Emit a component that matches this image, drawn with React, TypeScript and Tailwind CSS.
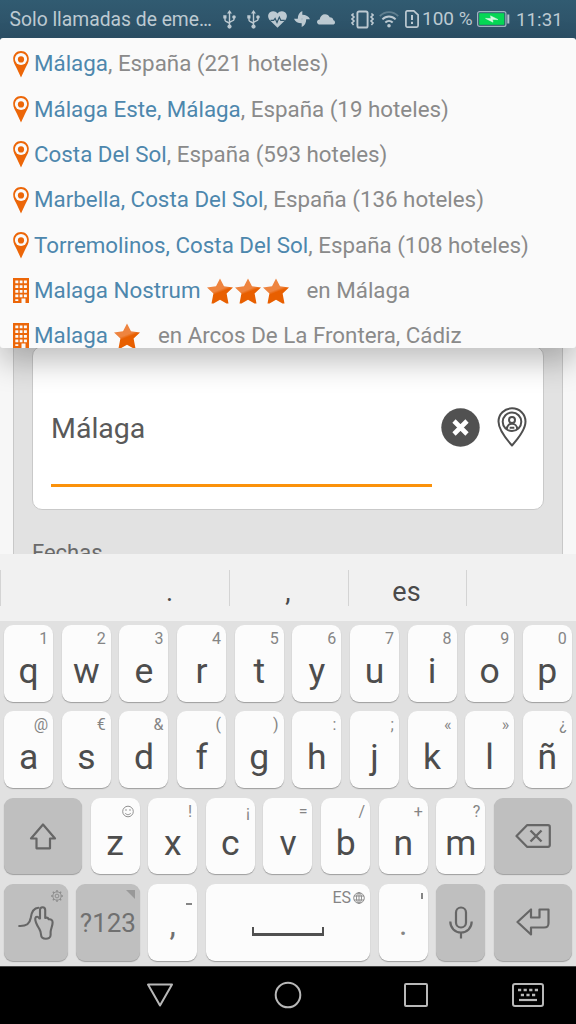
import type { ReactNode } from "react";
import clsx from "clsx";

interface Suggestion {
  kind: "place" | "hotel";
  name: string;
  detail: string;
  stars?: number;
}

interface LetterKey {
  label: string;
  hint: ReactNode;
}

const suggestions: Suggestion[] = [
  { kind: "place", name: "Málaga", detail: ", España (221 hoteles)" },
  { kind: "place", name: "Málaga Este, Málaga", detail: ", España (19 hoteles)" },
  { kind: "place", name: "Costa Del Sol", detail: ", España (593 hoteles)" },
  { kind: "place", name: "Marbella, Costa Del Sol", detail: ", España (136 hoteles)" },
  { kind: "place", name: "Torremolinos, Costa Del Sol", detail: ", España (108 hoteles)" },
  { kind: "hotel", name: "Malaga Nostrum", detail: "en Málaga", stars: 3 },
  { kind: "hotel", name: "Malaga", detail: "en Arcos De La Frontera, Cádiz", stars: 1 },
];

const topRow: LetterKey[] = [
  { label: "q", hint: "1" },
  { label: "w", hint: "2" },
  { label: "e", hint: "3" },
  { label: "r", hint: "4" },
  { label: "t", hint: "5" },
  { label: "y", hint: "6" },
  { label: "u", hint: "7" },
  { label: "i", hint: "8" },
  { label: "o", hint: "9" },
  { label: "p", hint: "0" },
];

const middleRow: LetterKey[] = [
  { label: "a", hint: "@" },
  { label: "s", hint: "€" },
  { label: "d", hint: "&" },
  { label: "f", hint: "(" },
  { label: "g", hint: ")" },
  { label: "h", hint: ":" },
  { label: "j", hint: ";" },
  { label: "k", hint: "«" },
  { label: "l", hint: "»" },
  { label: "ñ", hint: "¿" },
];

const bottomRow: LetterKey[] = [
  { label: "z", hint: <SmileIcon /> },
  { label: "x", hint: "!" },
  { label: "c", hint: "¡" },
  { label: "v", hint: "=" },
  { label: "b", hint: "/" },
  { label: "n", hint: "+" },
  { label: "m", hint: "?" },
];

function UsbIcon() {
  return (
    <svg width="13" height="19" viewBox="0 0 13 19" fill="none" stroke="currentColor" strokeWidth="1.4">
      <path d="M6.5 3v13M2 7v3.2c0 1.6 4.5 2 4.5 3.6M11 7v2.4c0 1.6-4.5 2-4.5 3.6" />
      <path d="M6.5 0 9 3.6H4zM.3 5.2h3.2v3.2H.3z" fill="currentColor" stroke="none" />
      <circle cx="11" cy="7" r="1.8" fill="currentColor" stroke="none" />
      <circle cx="6.5" cy="16.6" r="2.1" fill="currentColor" stroke="none" />
    </svg>
  );
}

function HeartIcon() {
  return (
    <svg width="19" height="17" viewBox="0 0 19 17">
      <path
        d="M9.5 16.8 1.6 9C-.6 6.4-.2 2.800 2 1.200 4.600-.6 7.800.1 9.500 2.400 11.200.1 14.400-.6 17 1.200c2.200 1.600 2.600 5.200.4 7.800z"
        fill="currentColor"
      />
      <path d="M2.500 9.300h3.200l1.400-1.800 1.900 4 2.300-5.400 1.500 3.200h4" fill="none" stroke="#30566c" strokeWidth="1.200" />
    </svg>
  );
}

function PinwheelIcon() {
  return (
    <svg width="16" height="16" viewBox="0 0 16 16" fill="currentColor">
      <path d="M8.300 0v7.700H3.800C3.800 4 5.300 1.200 8.300 0zM16 8.300H8.300V3.800C12 3.800 14.800 5.300 16 8.300zM7.700 16V8.300h4.500c0 3.700-1.500 6.500-4.500 7.700zM0 7.700h7.700v4.500C4 12.200 1.200 10.700 0 7.700z" />
    </svg>
  );
}

function CloudIcon() {
  return (
    <svg width="18" height="11" viewBox="0 0 18 11" fill="currentColor">
      <path d="M3 10.600C1.200 10.600 0 9.400 0 8c0-1.500 1.200-2.600 2.700-2.600C3.200 2.300 5.300.3 8 .3c2.200 0 3.900 1.100 4.700 3 2.100 0 3.500 1.300 3.700 3 1 .3 1.600 1.100 1.600 2.100 0 1.300-1 2.200-2.300 2.200z" />
    </svg>
  );
}

function VibrateIcon() {
  return (
    <svg width="23" height="19" viewBox="0 0 23 19" fill="none" stroke="currentColor" strokeWidth="1.600">
      <rect x="6.400" y="1.500" width="10.200" height="16" rx="1.600" strokeWidth="1.900" />
      <path d="M2.600 3.500 1 5l2 2-2 2 2 2-2 2 1.600 2M20.400 3.500 22 5l-2 2 2 2-2 2 2 2-1.600 2" />
    </svg>
  );
}

function WifiIcon() {
  return (
    <svg width="20" height="17" viewBox="0 0 20 17" fill="none" stroke="currentColor" strokeWidth="1.900">
      <path d="M.8 5.200c5.200-5.400 13.200-5.400 18.400 0" opacity=".35" />
      <path d="M3.400 8.400c3.700-3.900 9.500-3.900 13.200 0M6.300 11.500c2.200-2.200 5.200-2.200 7.400 0" />
      <circle cx="10" cy="14.800" r="1.800" fill="currentColor" stroke="none" />
    </svg>
  );
}

function SimAlertIcon() {
  return (
    <svg width="14" height="18" viewBox="0 0 14 18" fill="none" stroke="currentColor" strokeWidth="1.700">
      <path d="M2.300.9h6.500l4.300 4v10.700c0 .8-.6 1.500-1.400 1.500H2.300c-.8 0-1.400-.7-1.400-1.500V2.400C.9 1.600 1.500.9 2.300.9z" />
      <path d="M7 5v5M7 11.800v2.200" strokeWidth="2" />
    </svg>
  );
}

function BatteryIcon() {
  return (
    <svg width="33" height="16" viewBox="0 0 33 16">
      <rect x=".6" y=".6" width="28.300" height="14.800" rx="2" fill="none" stroke="#9fb4c0" strokeWidth="1.200" />
      <rect x="2.200" y="2.200" width="25.100" height="11.600" fill="#06d755" />
      <path d="M8.500 7.400 14 7.600l-.5-2.800L21 8.600l-5.500-.2.500 2.800z" fill="#d8f8e4" stroke="#d8f8e4" strokeWidth=".5" />
      <path d="M31.300 3.500v9" stroke="#b5c4cd" strokeWidth="2" />
    </svg>
  );
}

function PlaceIcon() {
  return (
    <svg width="16" height="27" viewBox="0 0 16 27">
      <path d="M8 0C3.500 0 .2 3.500.2 7.800c0 3.600 1.600 5.800 3.600 9.700L8 26.500l4.200-9c2-3.900 3.600-6.100 3.600-9.700C15.800 3.500 12.500 0 8 0z" fill="#ec6608" />
      <circle cx="8" cy="8" r="6.100" fill="#fafafa" />
      <circle cx="8" cy="8.400" r="3.100" fill="#ec6608" />
    </svg>
  );
}

function HotelIcon() {
  return (
    <svg width="16" height="25" viewBox="0 0 16 25">
      <path d="M0 0h16v25h-3.500v-4.500h-4V25H0z" fill="#ec6608" />
      <path
        d="M2.300 2.500h3v2.800h-3zM6.700 2.500h2.800v2.800H6.700zM10.900 2.500h3v2.800h-3zM2.300 7.200h3V10h-3zM6.700 7.200h2.800V10H6.700zM10.900 7.200h3V10h-3zM2.300 11.900h3v2.800h-3zM6.700 11.900h2.800v2.800H6.700zM10.900 11.900h3v2.800h-3zM2.300 16.500h3v2.800h-3zM6.700 16.500h2.800v2.800H6.700zM10.900 16.500h3v2.800h-3zM2.300 21.200h3v1.700h-3z"
        fill="#fafafa"
      />
    </svg>
  );
}

function StarIcon() {
  return (
    <svg width="28" height="26" viewBox="0 0 28 26">
      <defs>
        <linearGradient id="star-fill" x1="0.300" y1="0" x2="0.700" y2="1">
          <stop offset="0.450" stopColor="#ee843f" />
          <stop offset="0.550" stopColor="#e85f00" />
        </linearGradient>
      </defs>
      <path d="M14 .5 18 8.200l9 1.200-6.400 6 1.900 10h-2L14 21.800l-6.500 3.600h-2l1.900-10L1 9.400l9-1.200z" fill="url(#star-fill)" />
    </svg>
  );
}

function LocateIcon() {
  return (
    <svg width="30" height="40" viewBox="0 0 30 40" fill="none" stroke="#4f4f4f" strokeWidth="2" strokeLinejoin="round">
      <path d="M15 1.300C7.300 1.300 1.500 7.200 1.500 14.600 1.500 23.500 10.500 33.500 15 38.500c4.500-5 13.500-15 13.500-23.900C28.500 7.200 22.700 1.300 15 1.300z" />
      <circle cx="15" cy="14.800" r="9.300" />
      <circle cx="15" cy="12.900" r="3" />
      <path d="M9.800 22.300c0-7.300 10.400-7.300 10.400 0M12.700 20.700h4.600" />
    </svg>
  );
}

function SmileIcon() {
  return (
    <svg className="mr-[1px]" width="12" height="16" viewBox="0 -1.500 12 16" fill="none" stroke="#858585" strokeWidth="0.900">
      <circle cx="6" cy="6" r="5.300" />
      <path d="M3.300 7.600c1.200 2.100 4.200 2.100 5.400 0M4 3.600v1.800M8 3.600v1.800" />
    </svg>
  );
}

function StatusBar() {
  return (
    <header className="flex h-[40px] shrink-0 items-start bg-linear-to-b from-[#315b71] to-[#2c4f65] text-[#bdcad2]">
      <span className="ml-[9.500px] w-[213.500px] pt-[8px] text-[19.300px] leading-6 whitespace-nowrap">Solo llamadas de eme…</span>
      <div className="flex h-[38px] items-center">
        <UsbIcon />
        <span className="ml-[11px]"><UsbIcon /></span>
        <span className="ml-[8px]"><HeartIcon /></span>
        <span className="ml-[7px]"><PinwheelIcon /></span>
        <span className="ml-[7px]"><CloudIcon /></span>
        <span className="ml-[16px]"><VibrateIcon /></span>
        <span className="ml-[5px]"><WifiIcon /></span>
        <span className="ml-[6px]"><SimAlertIcon /></span>
      </div>
      <span className="ml-[3px] w-[55px] pt-[7px] text-[19px] leading-6 whitespace-nowrap">100 %</span>
      <span className="pt-[11px]"><BatteryIcon /></span>
      <span className="ml-[6px] pt-[8px] text-[18.800px] leading-6">11:31</span>
    </header>
  );
}

function SuggestionRow({ item }: { item: Suggestion }) {
  return (
    <li className="flex h-[45.3px] shrink-0 items-center text-[22.350px] whitespace-pre text-[#8a8a8a]">
      <span className="mr-[5.500px] ml-[12.500px]">{item.kind === "place" ? <PlaceIcon /> : <HotelIcon />}</span>
      <span className="text-[#4d87ad]">{item.name}</span>
      {item.stars && (
        <span className="mr-[17px] ml-[5px] flex">
          {Array.from({ length: item.stars }, (_, i) => (
            <StarIcon key={i} />
          ))}
        </span>
      )}
      <span>{item.detail}</span>
    </li>
  );
}

function SearchForm() {
  return (
    <main className="flex h-[514px] shrink-0 overflow-hidden bg-[#f7f7f7] px-[13px]">
      <div className="w-full border-x border-[#c8c8c8] bg-[#e2e2e2] px-[18px] pt-[306px]">
        <div className="flex h-[164px] rounded-[10px] border border-[#c9c9c9] bg-white pl-[18px]">
          <div className="mt-[49px] h-[91px] w-[381px] border-b-3 border-[#fb920b] pt-[15px] text-[28.500px] leading-9 text-[#595959]">
            Málaga
          </div>
          <svg className="mt-[61px] ml-[9px]" width="39" height="39" viewBox="0 0 39 39">
            <circle cx="19.500" cy="19.500" r="19.200" fill="#515151" />
            <path d="m13 13 13 13M26 13 13 26" stroke="#fff" strokeWidth="4.600" />
          </svg>
          <div className="mt-[60px] ml-[17px]">
            <LocateIcon />
          </div>
        </div>
        <p className="mt-[29px] text-[22px] leading-7 text-[#6a6a6a]">Fechas</p>
      </div>
    </main>
  );
}

function Key({ className, dark, children }: { className?: string; dark?: boolean; children?: ReactNode }) {
  return (
    <div
      className={clsx(
        "relative flex h-[76.5px] flex-col items-center rounded-[9px] shadow-[0_1px_1px_rgba(0,0,0,0.3)]",
        dark ? "bg-[#bfbfbf]" : "bg-[#fcfcfc]",
        className,
      )}
    >
      {children}
    </div>
  );
}

function Letter({ item }: { item: LetterKey }) {
  return (
    <Key className="w-[49px] shrink-0 pt-[6px]">
      <span className="mr-[5px] h-4 self-end text-[16px] leading-none text-[#858585]">{item.hint}</span>
      <span className="mt-[5.500px] text-[35.500px] leading-9 text-[#4d4d4d]">{item.label}</span>
    </Key>
  );
}

function Row({ children }: { children: ReactNode }) {
  return <div className="flex justify-between">{children}</div>;
}

function PredictionBar() {
  return (
    <div className="flex h-[67px] shrink-0 items-center bg-[#f1f1f1] text-[27px] text-[#4a4a4a]">
      <div className="flex h-[36px] w-[230px] items-center justify-end border-x border-[#d4d4d4] pt-[9px] pr-[56px]">.</div>
      <div className="flex h-[36px] w-[119px] items-center justify-center border-r border-[#d4d4d4] pt-[9px] pr-[2px]">,</div>
      <div className="flex h-[36px] w-[118px] items-center justify-center border-r border-[#d4d4d4] pt-[9px] pr-[2px]">es</div>
    </div>
  );
}

function Keyboard() {
  return (
    <section className="flex h-[345px] shrink-0 flex-col gap-[9.9px] bg-[#e1e1e1] px-[4.2px] pt-[4px]">
      <Row>
        {topRow.map((item) => (
          <Letter key={item.label} item={item} />
        ))}
      </Row>
      <Row>
        {middleRow.map((item) => (
          <Letter key={item.label} item={item} />
        ))}
      </Row>
      <Row>
        <Key dark className="w-[77.800px] justify-center">
          <svg width="28" height="28" viewBox="0 0 28 28" fill="none" stroke="#666" strokeWidth="2.200" strokeLinejoin="round">
            <path d="M14 2.500 26 16.500h-5v9.800H7.500v-9.800H2z" />
          </svg>
        </Key>
        {bottomRow.map((item) => (
          <Letter key={item.label} item={item} />
        ))}
        <Key dark className="w-[77.800px] justify-center">
          <svg width="36" height="24" viewBox="0 0 36 24" fill="none" stroke="#666" strokeWidth="2.200" strokeLinejoin="round">
            <path d="M12 1.200h21c1 0 1.800.7 1.800 1.700v18.200c0 1-.8 1.700-1.800 1.700H12L1.500 12z" />
            <path d="m15.500 6.500 11 11M26.500 6.500l-11 11" strokeWidth="2.400" />
          </svg>
        </Key>
      </Row>
      <Row>
        <Key dark className="w-[63.400px]">
          <svg className="absolute top-[6px] right-[5px]" width="12" height="12" viewBox="0 0 12 12" fill="none" stroke="#8e8e8e">
            <circle cx="6" cy="6" r="1.900" />
            <circle cx="6" cy="6" r="4.100" />
            <path d="M6 0v1.900M6 10.100V12M0 6h1.900M10.100 6H12M1.800 1.800l1.300 1.300M8.900 8.900l1.300 1.300M10.200 1.800 8.900 3.100M3.100 8.900l-1.300 1.300" strokeWidth="1.400" />
          </svg>
          <svg
            className="mt-[21px]"
            width="36"
            height="35"
            viewBox="0 0 36 35"
            fill="none"
            stroke="#666"
            strokeWidth="2.100"
            strokeLinecap="round"
            strokeLinejoin="round"
          >
            <path d="M1.200 21c7.300.3 10.500-1.800 11.500-8C13.500 7 16 3 20.500 2.800" />
            <path d="M22 13.500V5c0-3.700 5.200-3.700 5.200 0v8c1.800-.8 3 .2 3.500 1.300 2.700-.3 4 1 3.900 3.200 0 3.500-1.800 6-2 9.500v3c0 5-9.300 5-9.500 0-.1-3.500-.5-4-2-6.500-2.300-3.800-4.300-7-3.800-10.200.5-2.300 3.200-2 4 .2z" />
          </svg>
        </Key>
        <Key dark className="w-[63.400px]">
          <svg className="absolute top-[6px] right-[5px]" width="9" height="9" viewBox="0 0 9 9">
            <path d="M0 0h9v9z" fill="#999" />
          </svg>
          <span className="mt-[26px] text-[26px] leading-none text-[#707070]">?123</span>
        </Key>
        <Key className="w-[49px]">
          <span className="absolute top-[19px] right-[5px] h-[2px] w-[6px] bg-[#858585]" />
          <span className="mt-[24px] text-[32px] leading-none text-[#707070]">,</span>
        </Key>
        <Key className="w-[164.200px]">
          <div className="flex items-center gap-[2px] self-end pt-[6px] pr-[5px] text-[16px] leading-none text-[#858585]">
            ES
            <svg width="12" height="12" viewBox="0 0 12 12" fill="none" stroke="#858585" strokeWidth=".9">
              <circle cx="6" cy="6" r="5.300" />
              <ellipse cx="6" cy="6" rx="2.500" ry="5.300" />
              <path d="M1 4h10M1 8h10M6 .5v11" />
            </svg>
          </div>
          <div className="mt-[21px] h-[9px] w-[72px] border-x-2 border-b-[3px] border-[#505050]" />
        </Key>
        <Key className="w-[49px]">
          <span className="absolute top-[9px] right-[5px] h-[6px] w-[2px] bg-[#858585]" />
          <span className="mt-[24px] text-[32px] leading-none text-[#858585]">.</span>
        </Key>
        <Key dark className="w-[49px]">
          <svg className="mt-[22px]" width="24" height="33" viewBox="0 0 24 33" fill="none" stroke="#666" strokeWidth="2.200">
            <rect x="7" y="1.500" width="10" height="20" rx="5" />
            <path d="M1.300 15.500C1.300 22 6 26.500 12 26.500S22.700 22 22.700 15.500M12 26.500v6" />
          </svg>
        </Key>
        <Key dark className="w-[77.800px]">
          <svg className="mt-[24px]" width="34" height="28" viewBox="0 0 34 28" fill="none" stroke="#666" strokeWidth="2.200" strokeLinejoin="round">
            <path d="M1.500 14 15 1.500v8h8.500v-8H32.500V15c0 3.500-1 4.500-4.500 4.500H15v7z" />
          </svg>
        </Key>
      </Row>
    </section>
  );
}

function NavBar() {
  return (
    <nav className="flex h-[58px] shrink-0 items-center border-t border-[#444] bg-black pb-[1px] pl-[146px] text-[#b8b8b8]">
      <svg width="28" height="24" viewBox="0 0 28 24" fill="none" stroke="currentColor" strokeWidth="2" strokeLinejoin="round">
        <path d="M2 1.500h24L14 22.500z" />
      </svg>
      <svg className="ml-[100px]" width="28" height="28" viewBox="0 0 28 28" fill="none" stroke="currentColor" strokeWidth="2">
        <circle cx="14" cy="14" r="12.300" />
      </svg>
      <svg className="ml-[102px]" width="24" height="24" viewBox="0 0 24 24" fill="none" stroke="currentColor" strokeWidth="2">
        <rect x="1" y="1" width="22" height="22" rx="1" />
      </svg>
      <svg className="ml-[84px]" width="32" height="24" viewBox="0 0 32 24" fill="none" stroke="currentColor" strokeWidth="2">
        <rect x="1" y="1" width="30" height="22" rx="2" />
        <path d="M6 7h20" strokeWidth="2.600" strokeDasharray="3.200 2.400" />
        <path d="M8.800 12h15" strokeWidth="2.600" strokeDasharray="3.200 2.400" />
        <path d="M7 17h18" strokeWidth="2.200" />
      </svg>
    </nav>
  );
}

export default function App() {
  return (
    <div className="relative flex h-[1024px] w-[576px] flex-col overflow-hidden font-[Roboto,sans-serif]">
      <StatusBar />
      <SearchForm />
      <ul className="absolute top-[38px] left-0 flex h-[310px] w-full flex-col overflow-hidden rounded-[3px] bg-[#fafafa] pt-[3.500px] shadow-[0_14px_30px_rgba(0,0,0,0.25)]">
        {suggestions.map((item) => (
          <SuggestionRow key={item.name} item={item} />
        ))}
      </ul>
      {/* covers the lower part of the form and the menu's shadow */}
      <div className="relative flex flex-col">
        <PredictionBar />
        <Keyboard />
        <NavBar />
      </div>
    </div>
  );
}
